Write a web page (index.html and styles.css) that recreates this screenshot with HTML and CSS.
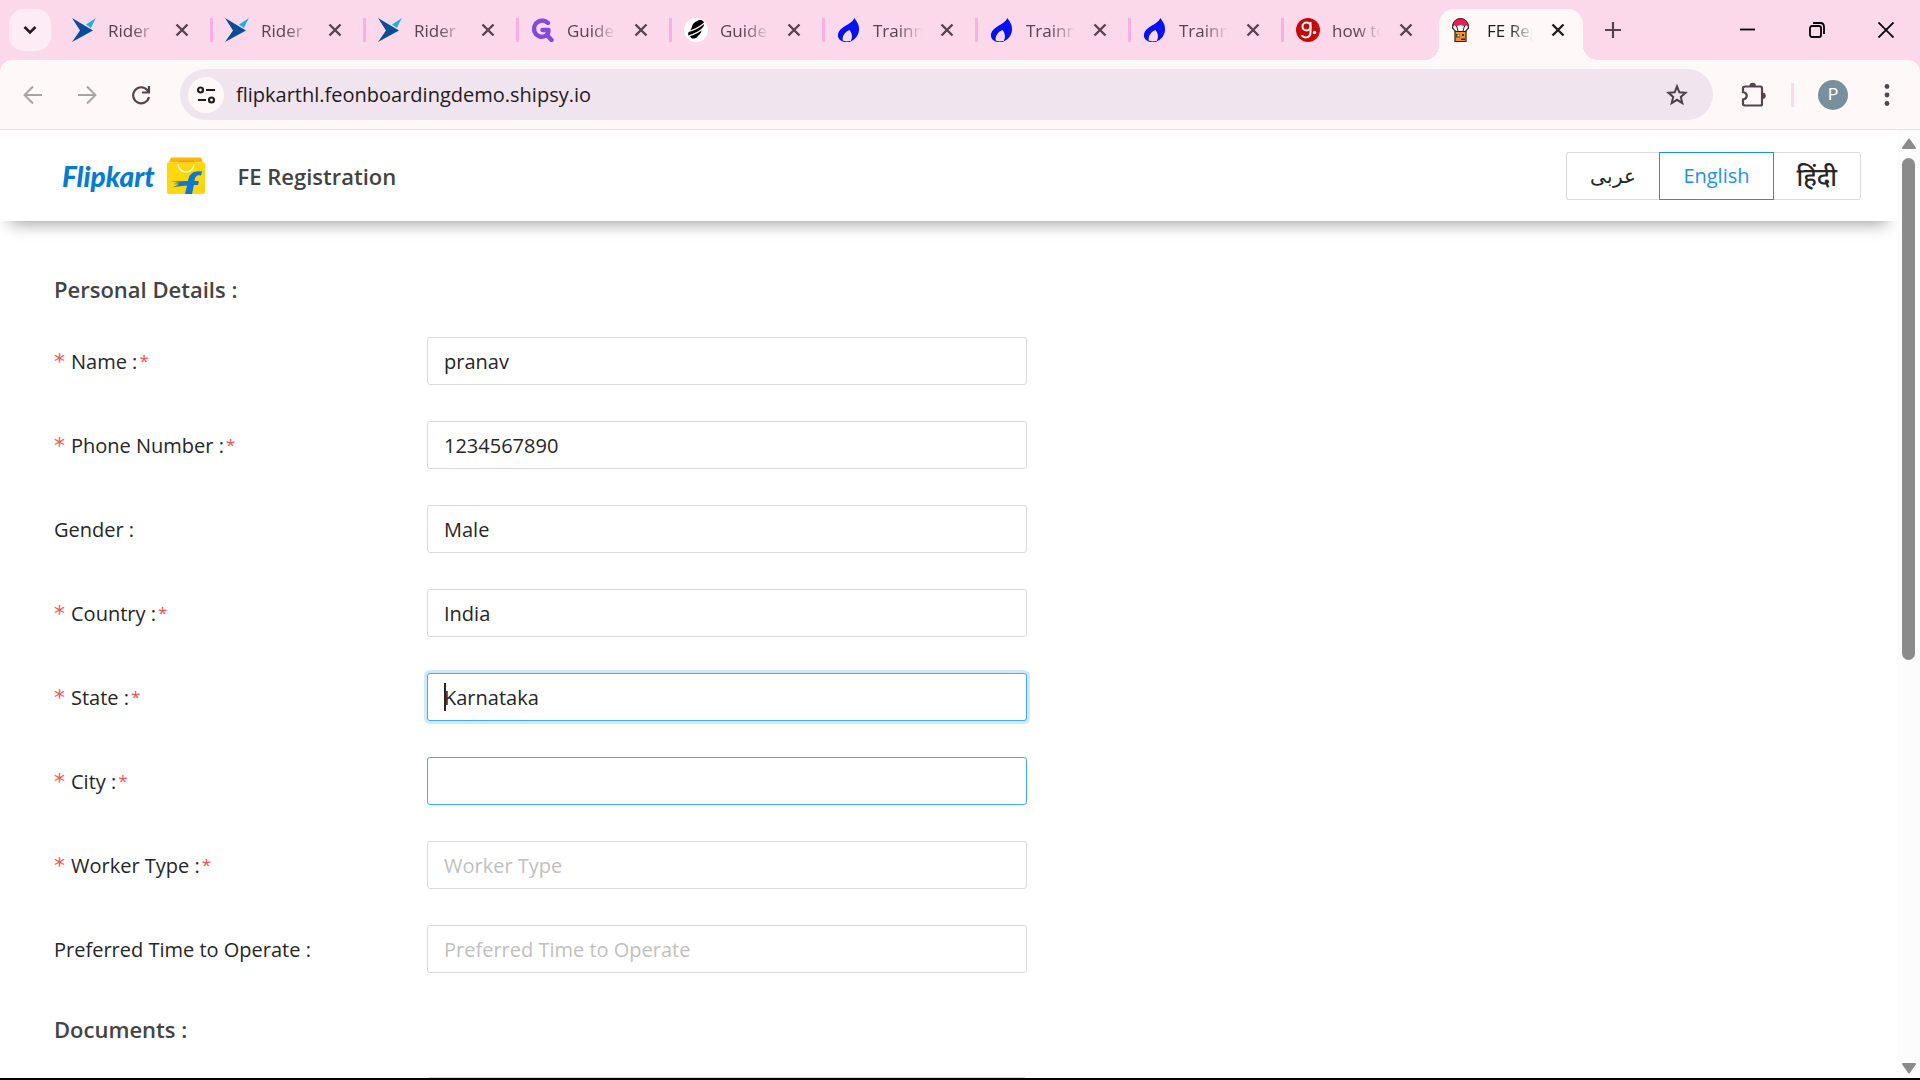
FILE: index.html
```html
<!DOCTYPE html>
<html lang="en">
<head>
  <meta charset="UTF-8" />
  <meta name="viewport" content="width=device-width, initial-scale=1.0"/>
  <title>FE Registration</title>
  <link rel="stylesheet" href="styles.css">
</head>
<body>

<!-- Shared icons -->
<svg class="sprite" aria-hidden="true">
  <symbol id="i-close" viewBox="0 0 14 14"><path d="M1.5 1.5l11 11M12.5 1.5l-11 11" stroke="currentColor" stroke-width="2.4"/></symbol>
  <symbol id="i-rider" viewBox="0 0 24 24">
    <path d="M0 0L21 12.5 0 24 8 12.5z" fill="#064f97"/>
    <path d="M24 0L14 6.500l5 3.500q2-5 5-10z" fill="#18b1e6"/>
  </symbol>
  <symbol id="i-flame" viewBox="0 0 24 24">
    <path d="M17.500 0C19 3 22.500 6 22 12c-.5 6-4.500 10-8.500 11.500C16 19 15 15 12.500 12 8 14 4.500 18 6 23.500 2 22.500.5 19 1 16 2.500 8.500 14 7 17.500 0z" fill="#0210fb"/>
    <path d="M5.500 23q3.500 1.500 8 .5" fill="none" stroke="#0210fb" stroke-width="1"/>
  </symbol>
</svg>

<div class="tabstrip">
  <button class="tab-search" aria-label="Search tabs">
    <svg width="14" height="10" viewBox="0 0 14 10"><path d="M1.500 2L7 7.500 12.500 2" fill="none" stroke="#231a1f" stroke-width="2.600"/></svg>
  </button>

  <div class="tab"><svg class="favicon"><use href="#i-rider"/></svg><span class="tab-title">Rider |</span><button class="tab-close" aria-label="Close tab"><svg><use href="#i-close"/></svg></button></div>
  <div class="tab"><svg class="favicon"><use href="#i-rider"/></svg><span class="tab-title">Rider</span><button class="tab-close" aria-label="Close tab"><svg><use href="#i-close"/></svg></button></div>
  <div class="tab"><svg class="favicon"><use href="#i-rider"/></svg><span class="tab-title">Rider</span><button class="tab-close" aria-label="Close tab"><svg><use href="#i-close"/></svg></button></div>
  <div class="tab">
    <svg class="favicon" viewBox="0 0 24 24"><path d="M17 5C14.500 2.500 10.500 2 7.500 3.500 3.500 5.500 2.500 10 3.500 13.500 5 18.500 11 20 15 17.500 17 16.500 17.500 14.500 17.500 12H11.500M16 17L20.500 22" fill="none" stroke="#8547e0" stroke-width="4.400" stroke-linecap="round" stroke-linejoin="round"/></svg>
    <span class="tab-title">Guide</span><button class="tab-close" aria-label="Close tab"><svg><use href="#i-close"/></svg></button>
  </div>
  <div class="tab">
    <svg class="favicon" viewBox="0 0 24 24"><circle cx="12" cy="12" r="12" fill="#fff"/><path d="M14 2.500c3-1.500 7 .5 6 4.500-.5 2-2 3-2.500 5 0 3-2 4.500-4 6.500-2 3-7 2.500-7 0-3 0-3-4-.5-6C8 10.500 7.500 9 8.500 7c1-2.500 3.500-3.500 5.500-4.500z" fill="#000"/><path d="M4 13.500Q12 12 20.500 5M4.500 18Q13 16 20 9.500" stroke="#fff" stroke-width="1.200" fill="none"/></svg>
    <span class="tab-title">Guide</span><button class="tab-close" aria-label="Close tab"><svg><use href="#i-close"/></svg></button>
  </div>
  <div class="tab"><svg class="favicon"><use href="#i-flame"/></svg><span class="tab-title">Trainn</span><button class="tab-close" aria-label="Close tab"><svg><use href="#i-close"/></svg></button></div>
  <div class="tab"><svg class="favicon"><use href="#i-flame"/></svg><span class="tab-title">Trainn</span><button class="tab-close" aria-label="Close tab"><svg><use href="#i-close"/></svg></button></div>
  <div class="tab"><svg class="favicon"><use href="#i-flame"/></svg><span class="tab-title">Trainn</span><button class="tab-close" aria-label="Close tab"><svg><use href="#i-close"/></svg></button></div>
  <div class="tab">
    <svg class="favicon" viewBox="0 0 24 24"><circle cx="12" cy="12" r="12" fill="#cb0606"/><g fill="none" stroke="#fff" stroke-width="2"><circle cx="10.500" cy="8.500" r="4"/><path d="M14.500 4v10.500c0 6-8 6-8.500 2.500"/></g><circle cx="18.500" cy="14.500" r="1.700" fill="#fff"/></svg>
    <span class="tab-title">how to</span><button class="tab-close" aria-label="Close tab"><svg><use href="#i-close"/></svg></button>
  </div>
  <div class="tab tab-active">
    <svg class="favicon" viewBox="0 0 24 24">
      <path d="M1.500 10C1.500 4 5 .7 9.500 .7S17.500 4 17.500 10l-3 3.500h-10z" fill="#fff" stroke="#222" stroke-width="1.200"/>
      <path d="M1.500 8C2.500 3 5.500.7 9.500.7S16.500 3 17.500 8q-2-2-4 0-4-3-8 0-2-2-4 0z" fill="#ed1c5b" stroke="#5a1030" stroke-width=".6"/>
      <path d="M5.500 8l1.500 5M13.500 8L12 13" stroke="#222" stroke-width="1"/>
      <path d="M4 13.500h11v10H4z" fill="#f9930a" stroke="#3a1c05" stroke-width="1.200"/>
      <path d="M5 16h4v3.500H5z" fill="#444"/><path d="M6.500 16.500h2v2h-2z" fill="#ddd"/><path d="M11 16h2v2h-2zM10 20.500h4v1.500h-4z" fill="#3a1c05"/>
    </svg>
    <span class="tab-title">FE Registration</span><button class="tab-close" aria-label="Close tab"><svg><use href="#i-close"/></svg></button>
  </div>

  <button class="new-tab" aria-label="New tab">
    <svg width="16" height="16" viewBox="0 0 16 16"><path d="M8 0v16M0 8h16" stroke="currentColor" stroke-width="2.200"/></svg>
  </button>

  <div class="window-buttons">
    <button aria-label="Minimize"><svg width="16" height="16" viewBox="0 0 16 16"><path d="M0 7.500h15" stroke="#000" stroke-width="1.800"/></svg></button>
    <button aria-label="Restore"><svg width="16" height="16" viewBox="0 0 16 16"><g fill="none" stroke="#000" stroke-width="1.800"><rect x="1" y="4" width="11" height="11" rx="2"/><path d="M4 1h7.500Q15 1 15 5v7"/></g></svg></button>
    <button aria-label="Close"><svg width="16" height="16" viewBox="0 0 16 16"><path d="M.5.5l15 15M15.500.5l-15 15" stroke="#000" stroke-width="1.800"/></svg></button>
  </div>
</div>

<div class="toolbar">
  <button class="tool" aria-label="Back" disabled><svg width="20" height="20" viewBox="0 0 20 20"><path d="M19 10H2M10 1.500L1.500 10l8.500 8.500" fill="none" stroke="#a9a2a6" stroke-width="2"/></svg></button>
  <button class="tool" aria-label="Forward" disabled><svg width="20" height="20" viewBox="0 0 20 20"><path d="M1 10h17M10 1.500l8.500 8.500-8.500 8.500" fill="none" stroke="#a9a2a6" stroke-width="2"/></svg></button>
  <button class="tool" aria-label="Reload"><svg width="20" height="20" viewBox="0 0 20 20"><path d="M18 12a8 8 0 1 1-1.500-6.700L18 7M18 1v6.500h-7" fill="none" stroke="currentColor" stroke-width="2.200"/></svg></button>
  <div class="address">
    <button class="site-info" aria-label="View site information">
      <svg width="20" height="20" viewBox="0 0 20 20"><g fill="none" stroke="#231a1f" stroke-width="2.200"><circle cx="4.500" cy="5" r="2.500"/><path d="M10 5h9M2 15h8"/><circle cx="15.500" cy="15" r="2.500"/></g></svg>
    </button>
    <input class="address-input" type="text" aria-label="Address" value="flipkarthl.feonboardingdemo.shipsy.io">
    <button class="star" aria-label="Bookmark this tab"><svg width="24" height="24" viewBox="0 0 24 24"><path d="M12 3.300l2.300 6 6.200.5-4.700 4.100 1.500 6.200-5.300-3.300-5.300 3.300 1.500-6.200-4.700-4.100 6.200-.5z" fill="none" stroke="#4d3f48" stroke-width="2"/></svg></button>
  </div>
  <button class="tool extensions" aria-label="Extensions">
    <svg width="26" height="26" viewBox="0 0 26 26"><path d="M4.500 4.500h15q1.500 0 1.500 1.500v16q0 1.500-1.500 1.500h-15Q2 23.500 2 22v-4.500c5-1 5-6.500 0-7.500V6q0-1.500 2.500-1.500z" fill="none" stroke="currentColor" stroke-width="2.200"/><path d="M8.500 4a3.200 3.200 0 0 1 6.400 0zM21.500 10.500a3.200 3.200 0 0 1 0 6.400z" fill="currentColor"/></svg>
  </button>
  <span class="tool-divider"></span>
  <button class="avatar" aria-label="Profile">P</button>
  <button class="tool" aria-label="Menu"><svg width="6" height="24" viewBox="0 0 6 24"><g fill="currentColor"><circle cx="3" cy="3.500" r="2.400"/><circle cx="3" cy="12" r="2.400"/><circle cx="3" cy="20.500" r="2.400"/></g></svg></button>
</div>

<div class="viewport">
  <main class="page">
    <header class="header">
      <span class="logo">Flipkart</span>
      <svg class="logo-bag" width="38" height="38" viewBox="0 0 38 38">
        <path d="M4 .5h30l2 5H2z" fill="#fcb900"/>
        <path d="M13 3.500h13l3 2H10z" fill="#f59a1b"/>
        <path d="M1 5.500h36q1 0 1 1V35q0 2-2 2H2q-2 0-2-2V6.500q0-1 1-1z" fill="#ffd708"/>
        <path d="M11 7.500c1 10 15 10 16 0" fill="none" stroke="#fff8d0" stroke-width="1.500"/>
        <path d="M35 14.500l-1 4q-6-1.500-6.500 5.500H32l-1 4h-4L25 37h-7l2-8.500q-7 .5-14 1.500l6-2.500-6-.5 7-1-9-1.500 17-.5c1-7 5-11 14-9.500z" fill="#0b78d8"/>
      </svg>
      <h1 class="title">FE Registration</h1>
      <div class="languages">
        <button class="lang" lang="ar">عربى</button>
        <button class="lang lang-active">English</button>
        <button class="lang" lang="hi">हिंदी</button>
      </div>
    </header>

    <form class="form">
      <h2>Personal Details :</h2>
      <div class="row">
        <label class="required" for="name">Name :<span class="star-mark">*</span></label>
        <input id="name" type="text" value="pranav">
      </div>
      <div class="row">
        <label class="required" for="phone">Phone Number :<span class="star-mark">*</span></label>
        <input id="phone" type="tel" value="1234567890">
      </div>
      <div class="row">
        <label for="gender">Gender :</label>
        <input id="gender" type="text" value="Male">
      </div>
      <div class="row">
        <label class="required" for="country">Country :<span class="star-mark">*</span></label>
        <input id="country" type="text" value="India">
      </div>
      <div class="row">
        <label class="required" for="state">State :<span class="star-mark">*</span></label>
        <div class="field">
          <input id="state" class="focused" type="text" value="Karnataka">
          <span class="caret"></span>
        </div>
      </div>
      <div class="row">
        <label class="required" for="city">City :<span class="star-mark">*</span></label>
        <input id="city" class="hovered" type="text">
      </div>
      <div class="row">
        <label class="required" for="worker">Worker Type :<span class="star-mark">*</span></label>
        <input id="worker" type="text" placeholder="Worker Type">
      </div>
      <div class="row">
        <label for="time">Preferred Time to Operate :</label>
        <input id="time" type="text" placeholder="Preferred Time to Operate">
      </div>

      <h2>Documents :</h2>
      <div class="row">
        <label for="document"></label>
        <input id="document" type="text" aria-label="Document">
      </div>
    </form>
  </main>

  <div class="scrollbar">
    <svg width="14" height="11" viewBox="0 0 14 11"><path d="M7 1.500L13 10H1z" fill="#8b8b8b" stroke="#8b8b8b" stroke-width="2" stroke-linejoin="round"/></svg>
    <div class="track"><div class="thumb"></div></div>
    <svg width="14" height="11" viewBox="0 0 14 11"><path d="M7 9.500L13 1H1z" fill="#8b8b8b" stroke="#8b8b8b" stroke-width="2" stroke-linejoin="round"/></svg>
  </div>
</div>

</body>
</html>
```

FILE: styles.css
```css
:root {
  --strip: #fbd9ea;
  --toolbar: #fff8f8;
  --icon: #574350;
  --blue: #1890ff;
  --border: #d9d9d9;
}

* {
  margin: 0;
  padding: 0;
  box-sizing: border-box;
  font-family: 'Open Sans', 'Noto Sans', sans-serif;
}

body {
  display: flex;
  flex-direction: column;
  height: 100vh;
  overflow: hidden;
  background: var(--strip);
  border-bottom: 2px solid #000;
}

button {
  display: flex;
  align-items: center;
  justify-content: center;
  background: none;
  border: none;
  color: var(--icon);
}

.sprite {
  display: none;
}

/* Tab strip */
.tabstrip {
  display: flex;
  align-items: center;
  height: 60px;
  flex: none;
  padding-left: 9px;
}

.tab-search {
  width: 42px;
  height: 42px;
  flex: none;
  margin-right: 9px;
  border-radius: 15px;
  background: #feecf5;
}

.tab {
  display: flex;
  align-items: center;
  flex: 0 1 153px;
  min-width: 0;
  height: 24px;
  padding: 0 21px 0 12px;
  border-right: 3px solid #fdaee0;
  border-radius: 1px;
}

.favicon {
  width: 24px;
  height: 24px;
  flex: none;
}

.tab-title {
  flex: 1;
  min-width: 0;
  margin: 2px 18px 0 12px;
  overflow: hidden;
  white-space: nowrap;
  font-size: 17px;
  line-height: 24px;
  color: var(--icon);
  -webkit-mask-image: linear-gradient(to right, #000 50%, transparent);
  mask-image: linear-gradient(to right, #000 50%, transparent);
}

.tab-close,
.tab-close svg {
  width: 14px;
  height: 14px;
  flex: none;
}

.tab:nth-last-child(4) {
  border-color: transparent;
}

.tab-active {
  position: relative;
  flex-basis: 144px;
  align-self: flex-end;
  height: 51px;
  margin-left: 2px;
  padding: 0 18px 9px 12px;
  border: none;
  border-radius: 15px 15px 0 0;
  background: var(--toolbar);
}

.tab-active .tab-title,
.tab-active .tab-close {
  color: #231a1f;
}

/* Curved feet of the active tab */
.tab-active::before,
.tab-active::after {
  content: '';
  position: absolute;
  bottom: 0;
  width: 15px;
  height: 15px;
}

.tab-active::before {
  right: 100%;
  background: radial-gradient(circle at 0 0, transparent 15px, var(--toolbar) 15px);
}

.tab-active::after {
  left: 100%;
  background: radial-gradient(circle at 100% 0, transparent 15px, var(--toolbar) 15px);
}

.new-tab {
  width: 60px;
  height: 42px;
}

.window-buttons {
  display: flex;
  margin-left: auto;
}

.window-buttons button {
  width: 69px;
  height: 60px;
}

/* Toolbar */
.toolbar {
  display: flex;
  align-items: center;
  height: 70px;
  flex: none;
  padding: 0 6px;
  background: var(--toolbar);
  border-bottom: 1px solid #ecdfe6;
  border-radius: 12px 12px 0 0;
}

.tool {
  width: 54px;
  height: 51px;
  flex: none;
}

.address {
  display: flex;
  align-items: center;
  flex: 1;
  height: 51px;
  margin: 0 14px 0 12px;
  padding: 0 24px 0 8px;
  border-radius: 26px;
  background: #f0e4ee;
}

.site-info {
  width: 36px;
  height: 36px;
  border-radius: 50%;
  background: var(--toolbar);
}

.address-input {
  flex: 1;
  margin-left: 12px;
  border: none;
  outline: none;
  background: none;
  font-size: 20px;
  color: #231a1f;
}

.tool-divider {
  width: 3px;
  height: 24px;
  margin: 0 24px 0 10px;
  background: var(--strip);
}

.avatar {
  width: 30px;
  height: 30px;
  margin-right: 12px;
  border-radius: 50%;
  background: #78909c;
  color: #fff;
  font-family: Roboto, sans-serif;
  font-size: 16px;
}

/* Page */
.viewport {
  display: flex;
  flex: 1;
  min-height: 0;
  background: #fff;
}

.page {
  flex: 1;
  overflow: hidden;
}

.header {
  display: flex;
  align-items: center;
  height: 91px;
  padding: 0 36px 0 62px;
  box-shadow: 0 12px 16px -10px rgba(0, 0, 0, 0.4);
}

.logo {
  font-family: Lato, sans-serif;
  font-size: 28px;
  font-weight: 900;
  font-style: italic;
  color: #047bd5;
}

.logo-bag {
  margin: 0 33px 0 12px;
}

.title,
h2 {
  font-size: 22px;
  font-weight: 600;
  line-height: 32px;
  color: #434343;
}

.languages {
  display: flex;
  margin-left: auto;
}

.lang {
  height: 48px;
  padding: 0 23px;
  border: 1px solid var(--border);
  font-size: 20px;
  font-weight: 500;
  color: #262626;
}

.lang:first-child {
  border-right: none;
  border-radius: 3px 0 0 3px;
}

.lang:last-child {
  border-left: none;
  border-radius: 0 3px 3px 0;
  font-size: 25px;
}

.lang-active {
  border-color: var(--blue);
  color: var(--blue);
}

.form {
  padding: 52px 43px 0 54px;
}

h2 {
  margin-bottom: 32px;
}

.row + h2 {
  margin-top: 40px;
}

.row {
  display: grid;
  grid-template-columns: 373fr 600fr 827fr;
  align-items: center;
}

.row + .row {
  margin-top: 36px;
}

label {
  font-size: 20px;
  color: #262626;
}

.required::before {
  content: '*';
  display: inline-block;
  width: 17px;
  font-family: 'DejaVu Sans', sans-serif;
  font-size: 22px;
  line-height: 20px;
  color: #ff4d4f;
}

.star-mark {
  margin-left: 2px;
  font-size: 17px;
  line-height: 20px;
  vertical-align: 2px;
  color: #ff4d4f;
}

.row input {
  width: 100%;
  height: 48px;
  padding: 0 16px;
  border: 1px solid var(--border);
  border-radius: 3px;
  outline: none;
  background: #fff;
  font-size: 20px;
  color: #262626;
}

.row input::placeholder {
  color: #bfbfbf;
}

.row .hovered,
.row .focused {
  border-color: #40a9ff;
}

.row .focused {
  box-shadow: 0 0 0 3px rgba(24, 144, 255, 0.2);
}

.field {
  position: relative;
}

.caret {
  position: absolute;
  left: 17px;
  top: 10px;
  width: 2px;
  height: 28px;
  background: #262626;
}

/* Scrollbar */
.scrollbar {
  display: flex;
  flex-direction: column;
  align-items: center;
  gap: 9px;
  width: 23px;
  padding: 8px 0 4px;
  background: #fcfcfc;
}

.track {
  flex: 1;
  width: 13px;
}

.thumb {
  height: 56%;
  border-radius: 7px;
  background: #8b8b8b;
}
```
